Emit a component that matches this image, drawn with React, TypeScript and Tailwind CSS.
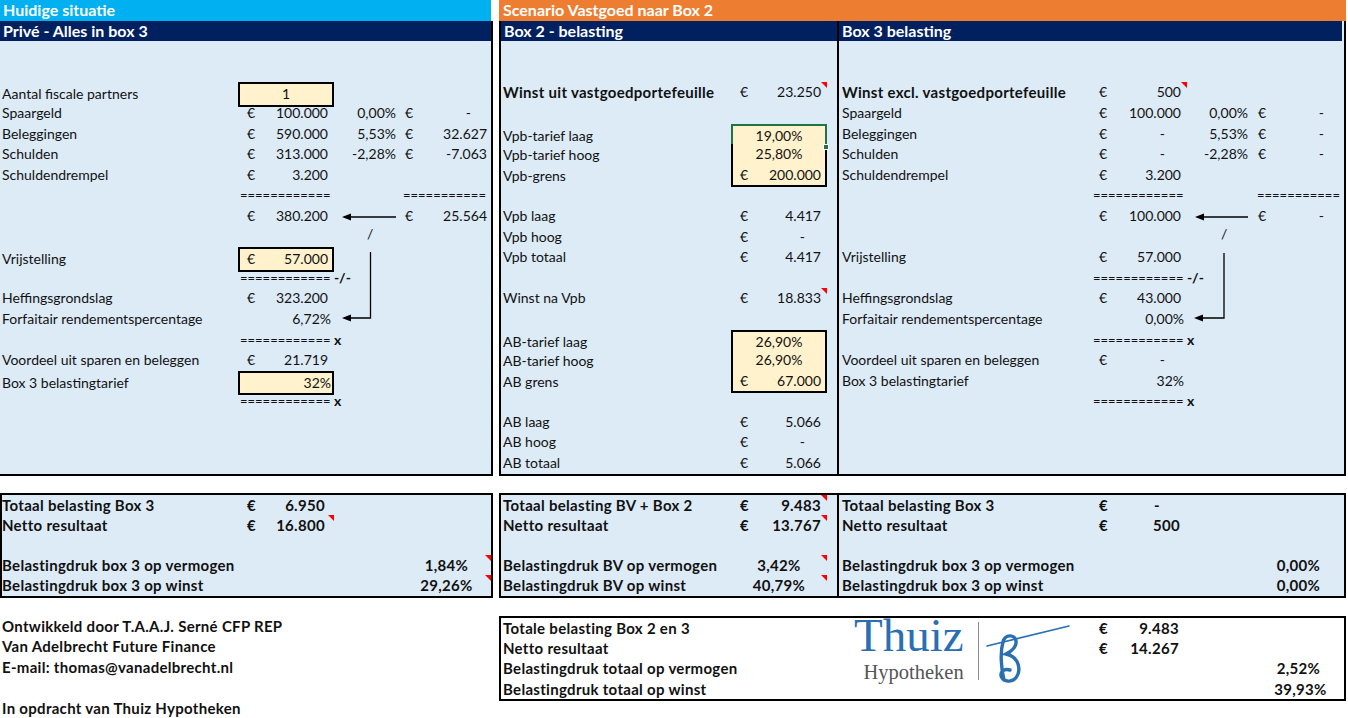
import React from "react";

const ROW = "h-[20.6px]";
const LCOLS = "grid h-[20.6px] grid-cols-[238px_96px_66px_91px] items-center";
const MCOLS = "grid h-[20.6px] grid-cols-[230px_96px_10px] items-center";
const RCOLS = "grid h-[20.6px] grid-cols-[251px_97px_66px_91px] items-center";
const BOLD = "text-[15px] font-bold tracking-[0.3px]";

// red comment marker in the top-right corner of a cell
function Tri() {
  return <span className="absolute right-0 top-0 h-0 w-0 border-l-[6px] border-t-[6px] border-l-transparent border-t-[#ff0000]" />;
}

function Eur({ v, tri, d, bold }: { v: string; tri?: boolean; d?: boolean; bold?: boolean }) {
  const dash = v === "-";
  const pl = d ? "pl-[5px]" : "pl-[9px]";
  const pr = d ? (dash ? "pr-[20px]" : "pr-[4px]") : dash ? "pr-[22px]" : bold ? "pr-[9px]" : "pr-[6px]";
  return (
    <div className={`relative flex h-full items-center justify-between ${pl} ${pr}`}>
      <span>€</span>
      <span>{v}</span>
      {tri && <Tri />}
    </div>
  );
}

function Box({ children, top, sel, className = "" }: { children: React.ReactNode; top?: boolean; sel?: boolean; className?: string }) {
  return (
    <div
      className={`relative flex h-full items-center bg-[#fff2cc] border-x-2 border-b-2 ${top ? "border-t-2" : ""} ${
        sel ? "border-[#217346]" : "border-black"
      } ${className}`}
    >
      {children}
      {sel && <span className="absolute -bottom-[4px] -right-[4px] z-10 h-[6px] w-[6px] border border-white bg-[#217346]" />}
    </div>
  );
}

function Eq({ n = 12, suffix, pl = "pl-[2px]" }: { n?: number; suffix?: string; pl?: string }) {
  return (
    <div className={`whitespace-nowrap text-[13px] ${pl}`}>
      {"=".repeat(n)}
      {suffix && <span className="text-[14px] font-bold"> {suffix}</span>}
    </div>
  );
}

function Navy({ children }: { children: React.ReactNode }) {
  return <div className="h-[20.6px] bg-[#002060] pl-[3px] text-[16px] font-bold leading-[20.6px] text-white">{children}</div>;
}

function LeftPanel() {
  return (
    <div className="border-b-2 border-r-2 border-black bg-[#ddebf7]">
      <Navy>Privé - Alles in box 3</Navy>
      <div className={ROW} />
      <div className={ROW} />
      <div className={LCOLS}>
        <div className="pl-[2px]">Aantal fiscale partners</div>
        <Box top className="justify-center">1</Box>
      </div>
      <div className={LCOLS}>
        <div className="pl-[2px]">Spaargeld</div>
        <Eur v="100.000" />
        <div className="pr-[4px] text-right">0,00%</div>
        <Eur d v="-" />
      </div>
      <div className={LCOLS}>
        <div className="pl-[2px]">Beleggingen</div>
        <Eur v="590.000" />
        <div className="pr-[4px] text-right">5,53%</div>
        <Eur d v="32.627" />
      </div>
      <div className={LCOLS}>
        <div className="pl-[2px]">Schulden</div>
        <Eur v="313.000" />
        <div className="pr-[4px] text-right">-2,28%</div>
        <Eur d v="-7.063" />
      </div>
      <div className={LCOLS}>
        <div className="pl-[2px]">Schuldendrempel</div>
        <Eur v="3.200" />
      </div>
      <div className={LCOLS}>
        <div />
        <Eq />
        <div />
        <Eq n={11} pl="pl-[3px]" />
      </div>
      <div className={LCOLS}>
        <div />
        <Eur v="380.200" />
        <div />
        <Eur d v="25.564" />
      </div>
      <div className={LCOLS}>
        <div />
        <div />
        <div className="-mt-[6px] pl-[33px]">/</div>
      </div>
      <div className={LCOLS}>
        <div className="pl-[2px]">Vrijstelling</div>
        <Box top className="justify-between pl-[7px] pr-[4px]">
          <span>€</span>
          <span>57.000</span>
        </Box>
      </div>
      <div className={LCOLS}>
        <div />
        <Eq suffix="-/-" />
      </div>
      <div className={LCOLS}>
        <div className="pl-[2px]">Heffingsgrondslag</div>
        <Eur v="323.200" />
      </div>
      <div className={LCOLS}>
        <div className="pl-[2px]">Forfaitair rendementspercentage</div>
        <div className="pr-[3px] text-right">6,72%</div>
      </div>
      <div className={LCOLS}>
        <div />
        <Eq suffix="x" />
      </div>
      <div className={LCOLS}>
        <div className="pl-[2px]">Voordeel uit sparen en beleggen</div>
        <Eur v="21.719" />
      </div>
      <div className={LCOLS}>
        <div className="pl-[2px]">Box 3 belastingtarief</div>
        <Box top className="justify-end pr-[1px]">32%</Box>
      </div>
      <div className={LCOLS}>
        <div />
        <Eq suffix="x" />
      </div>
      <div className={ROW} />
      <div className={ROW} />
      <div className={ROW} />
    </div>
  );
}

function MidPanel() {
  return (
    <div className="w-[336px]">
      <Navy>Box 2 - belasting</Navy>
      <div className={ROW} />
      <div className={ROW} />
      <div className={MCOLS}>
        <div className={`pl-[2px] ${BOLD}`}>Winst uit vastgoedportefeuille</div>
        <Eur v="23.250" tri />
      </div>
      <div className={ROW} />
      <div className={MCOLS}>
        <div className="pl-[2px]">Vpb-tarief laag</div>
        <Box top sel className="justify-center">19,00%</Box>
      </div>
      <div className={MCOLS}>
        <div className="pl-[2px]">Vpb-tarief hoog</div>
        <Box className="justify-center">25,80%</Box>
      </div>
      <div className={MCOLS}>
        <div className="pl-[2px]">Vpb-grens</div>
        <Box className="justify-between pl-[7px] pr-[4px]">
          <span>€</span>
          <span>200.000</span>
        </Box>
      </div>
      <div className={ROW} />
      <div className={MCOLS}>
        <div className="pl-[2px]">Vpb laag</div>
        <Eur v="4.417" />
      </div>
      <div className={MCOLS}>
        <div className="pl-[2px]">Vpb hoog</div>
        <Eur v="-" />
      </div>
      <div className={MCOLS}>
        <div className="pl-[2px]">Vpb totaal</div>
        <Eur v="4.417" />
      </div>
      <div className={ROW} />
      <div className={MCOLS}>
        <div className="pl-[2px]">Winst na Vpb</div>
        <Eur v="18.833" tri />
      </div>
      <div className={ROW} />
      <div className={MCOLS}>
        <div className="pl-[2px]">AB-tarief laag</div>
        <Box top className="justify-center">26,90%</Box>
      </div>
      <div className={MCOLS}>
        <div className="pl-[2px]">AB-tarief hoog</div>
        <Box className="justify-center">26,90%</Box>
      </div>
      <div className={MCOLS}>
        <div className="pl-[2px]">AB grens</div>
        <Box className="justify-between pl-[7px] pr-[4px]">
          <span>€</span>
          <span>67.000</span>
        </Box>
      </div>
      <div className={ROW} />
      <div className={MCOLS}>
        <div className="pl-[2px]">AB laag</div>
        <Eur v="5.066" />
      </div>
      <div className={MCOLS}>
        <div className="pl-[2px]">AB hoog</div>
        <Eur v="-" />
      </div>
      <div className={MCOLS}>
        <div className="pl-[2px]">AB totaal</div>
        <Eur v="5.066" />
      </div>
    </div>
  );
}

function RightPanel() {
  return (
    <div className="w-[505px] border-l-2 border-black">
      <Navy>Box 3 belasting</Navy>
      <div className={ROW} />
      <div className={ROW} />
      <div className={RCOLS}>
        <div className={`whitespace-nowrap pl-[3px] ${BOLD}`}>Winst excl. vastgoedportefeuille</div>
        <Eur v="500" tri />
      </div>
      <div className={RCOLS}>
        <div className="pl-[3px]">Spaargeld</div>
        <Eur v="100.000" />
        <div className="pr-[5px] text-right">0,00%</div>
        <Eur d v="-" />
      </div>
      <div className={RCOLS}>
        <div className="pl-[3px]">Beleggingen</div>
        <Eur v="-" />
        <div className="pr-[5px] text-right">5,53%</div>
        <Eur d v="-" />
      </div>
      <div className={RCOLS}>
        <div className="pl-[3px]">Schulden</div>
        <Eur v="-" />
        <div className="pr-[5px] text-right">-2,28%</div>
        <Eur d v="-" />
      </div>
      <div className={RCOLS}>
        <div className="pl-[3px]">Schuldendrempel</div>
        <Eur v="3.200" />
      </div>
      <div className={RCOLS}>
        <div />
        <Eq pl="pl-[3px]" />
        <div />
        <div className="overflow-hidden">
          <Eq n={11} pl="pl-[4px]" />
        </div>
      </div>
      <div className={RCOLS}>
        <div />
        <Eur v="100.000" />
        <div />
        <Eur d v="-" />
      </div>
      <div className={RCOLS}>
        <div />
        <div />
        <div className="-mt-[6px] pl-[34px]">/</div>
      </div>
      <div className={RCOLS}>
        <div className="pl-[3px]">Vrijstelling</div>
        <Eur v="57.000" />
      </div>
      <div className={RCOLS}>
        <div />
        <Eq pl="pl-[3px]" suffix="-/-" />
      </div>
      <div className={RCOLS}>
        <div className="pl-[3px]">Heffingsgrondslag</div>
        <Eur v="43.000" />
      </div>
      <div className={RCOLS}>
        <div className="pl-[3px]">Forfaitair rendementspercentage</div>
        <div className="pr-[3px] text-right">0,00%</div>
      </div>
      <div className={RCOLS}>
        <div />
        <Eq pl="pl-[3px]" suffix="x" />
      </div>
      <div className={RCOLS}>
        <div className="pl-[3px]">Voordeel uit sparen en beleggen</div>
        <Eur v="-" />
      </div>
      <div className={RCOLS}>
        <div className="pl-[3px]">Box 3 belastingtarief</div>
        <div className="pr-[3px] text-right">32%</div>
      </div>
      <div className={RCOLS}>
        <div />
        <Eq pl="pl-[3px]" suffix="x" />
      </div>
      <div className={ROW} />
      <div className={ROW} />
      <div className={ROW} />
    </div>
  );
}

const BROW = "grid h-[20.2px] items-center";

function Summary() {
  return (
    <div className={`mt-[17px] flex ${BOLD}`}>
      <div className="w-[493px] border-2 border-black bg-[#ddebf7]">
        <div className={`${BROW} grid-cols-[236px_96px_66px_91px]`}>
          <div>Totaal belasting Box 3</div>
          <Eur v="6.950" bold />
        </div>
        <div className={`${BROW} grid-cols-[236px_96px_66px_91px]`}>
          <div>Netto resultaat</div>
          <Eur v="16.800" bold tri />
        </div>
        <div className="h-[20.2px]" />
        <div className={`${BROW} grid-cols-[236px_96px_66px_91px]`}>
          <div className="whitespace-nowrap">Belastingdruk box 3 op vermogen</div>
          <div />
          <div />
          <div className="relative h-full pl-[2px] text-center leading-[20.2px]">
            1,84%
            <Tri />
          </div>
        </div>
        <div className={`${BROW} grid-cols-[236px_96px_66px_91px]`}>
          <div>Belastingdruk box 3 op winst</div>
          <div />
          <div />
          <div className="relative h-full pl-[2px] text-center leading-[20.2px]">
            29,26%
            <Tri />
          </div>
        </div>
      </div>
      <div className="ml-[6px] flex w-[847px] border-2 border-black bg-[#ddebf7]">
        <div className="w-[336px]">
          <div className={`${BROW} grid-cols-[230px_96px_10px]`}>
            <div className="pl-[2px]">Totaal belasting BV + Box 2</div>
            <Eur v="9.483" tri />
          </div>
          <div className={`${BROW} grid-cols-[230px_96px_10px]`}>
            <div className="pl-[2px]">Netto resultaat</div>
            <Eur v="13.767" tri />
          </div>
          <div className="h-[20.2px]" />
          <div className={`${BROW} grid-cols-[230px_96px_10px]`}>
            <div className="pl-[2px]">Belastingdruk BV op vermogen</div>
            <div className="relative h-full text-center leading-[20.2px]">
              3,42%
              <Tri />
            </div>
          </div>
          <div className={`${BROW} grid-cols-[230px_96px_10px]`}>
            <div className="pl-[2px]">Belastingdruk BV op winst</div>
            <div className="relative h-full text-center leading-[20.2px]">
              40,79%
              <Tri />
            </div>
          </div>
        </div>
        <div className="w-[505px] border-l-2 border-black">
          <div className={`${BROW} grid-cols-[251px_97px_66px_91px]`}>
            <div className="pl-[3px]">Totaal belasting Box 3</div>
            <div className="flex justify-between pl-[9px] pr-[27px]">
              <span>€</span>
              <span>-</span>
            </div>
          </div>
          <div className={`${BROW} grid-cols-[251px_97px_66px_91px]`}>
            <div className="pl-[3px]">Netto resultaat</div>
            <div className="flex justify-between pl-[9px] pr-[7px]">
              <span>€</span>
              <span>500</span>
            </div>
          </div>
          <div className="h-[20.2px]" />
          <div className={`${BROW} grid-cols-[251px_97px_66px_91px]`}>
            <div className="pl-[3px]">Belastingdruk box 3 op vermogen</div>
            <div />
            <div />
            <div className="text-center">0,00%</div>
          </div>
          <div className={`${BROW} grid-cols-[251px_97px_66px_91px]`}>
            <div className="pl-[3px]">Belastingdruk box 3 op winst</div>
            <div />
            <div />
            <div className="text-center">0,00%</div>
          </div>
        </div>
      </div>
    </div>
  );
}

function Logo() {
  return (
    <div className="col-start-2 row-span-4 row-start-1 flex items-start self-start pl-[4px] tracking-normal">
      <div className="-mt-[9px] flex flex-col items-end font-['Liberation_Serif',serif] font-normal">
        <span className="text-[47px] leading-[52px] text-[#2b6fb3]">Thuiz</span>
        <span className="text-[20.5px] leading-[22px] text-[#555555]">Hypotheken</span>
      </div>
      <div className="ml-[14px] mt-[4px] h-[58px] w-px bg-[#8a8a8a]" />
      <svg width="86" height="66" viewBox="0 0 86 66" className="ml-[6px] mt-[2px]">
        <path d="M2 26 L84 6" stroke="#2b6fb3" strokeWidth="1.6" fill="none" strokeLinecap="round" />
        <path
          d="M19 60 C16 48 15 32 18 22 C20 14 30 14 31 21 C32 28 25 32 21 34 C31 36 36 45 33 54 C30 62 21 63 17 58 C14 53 18 48 25 50"
          stroke="#2b6fb3"
          strokeWidth="3.4"
          fill="none"
          strokeLinecap="round"
        />
      </svg>
    </div>
  );
}

function Footer() {
  return (
    <div className={`mt-[18px] flex ${BOLD}`}>
      <div className="w-[493px] pl-[2px] leading-[20.5px]">
        <div>Ontwikkeld door T.A.A.J. Serné CFP REP</div>
        <div>Van Adelbrecht Future Finance</div>
        <div>E-mail: thomas@vanadelbrecht.nl</div>
        <div className="h-[20.5px]" />
        <div>In opdracht van Thuiz Hypotheken</div>
      </div>
      <div className="ml-[6px] grid h-[85.6px] w-[847px] grid-cols-[349px_240px_97px_66px_91px] grid-rows-[repeat(4,20.4px)] items-center self-start border-2 border-black bg-white">
        <Logo />
        <div className="pl-[2px]">Totale belasting Box 2 en 3</div>
        <div className="flex justify-between pl-[9px] pr-[8px]">
          <span>€</span>
          <span>9.483</span>
        </div>
        <div />
        <div />
        <div className="pl-[2px]">Netto resultaat</div>
        <div className="flex justify-between pl-[9px] pr-[8px]">
          <span>€</span>
          <span>14.267</span>
        </div>
        <div />
        <div />
        <div className="whitespace-nowrap pl-[2px]">Belastingdruk totaal op vermogen</div>
        <div />
        <div />
        <div className="text-center">2,52%</div>
        <div className="pl-[2px]">Belastingdruk totaal op winst</div>
        <div />
        <div />
        <div className="pl-[4px] text-center">39,93%</div>
      </div>
    </div>
  );
}

export default function App() {
  return (
    <div className="relative h-[718px] w-[1348px] overflow-hidden bg-white font-['Lato',sans-serif] text-[14px] leading-[20.6px] text-[#111111]">
      <div className="flex">
        <div className="w-[493px]">
          <div className="h-[20.6px] w-[491px] bg-[#00b0f0] pl-[3px] text-[16px] font-bold text-white">Huidige situatie</div>
          <LeftPanel />
        </div>
        <div className="ml-[6px] w-[847px]">
          <div className="h-[20.6px] bg-[#ed7d31] pl-[4px] text-[16px] font-bold text-white">Scenario Vastgoed naar Box 2</div>
          <div className="flex border-x-2 border-b-2 border-black bg-[#ddebf7]">
            <MidPanel />
            <RightPanel />
          </div>
        </div>
      </div>
      <Summary />
      <Footer />

      {/* arrows drawn over the sheet */}
      <svg className="pointer-events-none absolute left-0 top-0" width="1348" height="718">
        <g stroke="#000" strokeWidth="1.3" fill="none">
          <path d="M396 217 H349" />
          <path d="M370.5 252 V318 H349" />
          <path d="M1248 217 H1202" />
          <path d="M1224 253 V318 H1201" />
        </g>
        <g fill="#000">
          <polygon points="342,217 351,213.5 351,220.5" />
          <polygon points="342,318 351,314.5 351,321.5" />
          <polygon points="1195,217 1204,213.5 1204,220.5" />
          <polygon points="1194,318 1203,314.5 1203,321.5" />
        </g>
      </svg>
    </div>
  );
}
